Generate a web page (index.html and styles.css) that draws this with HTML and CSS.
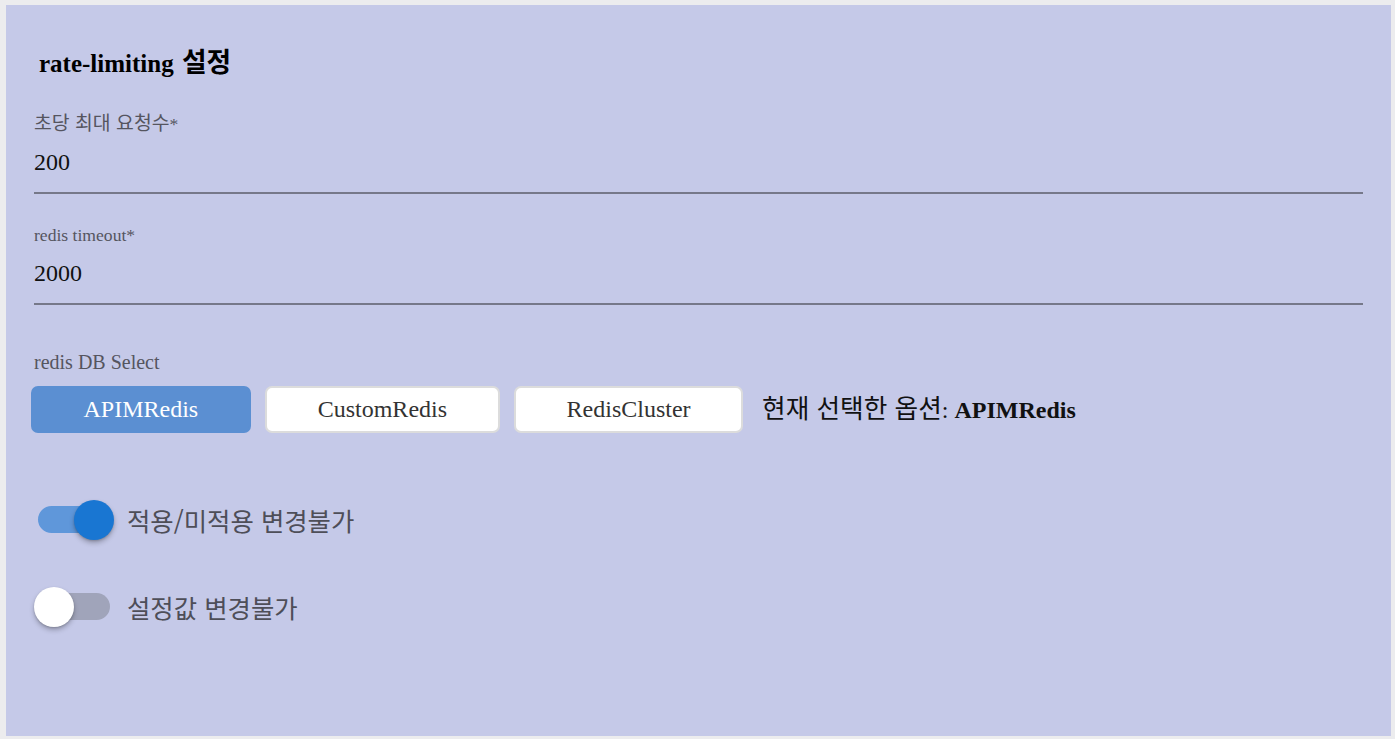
FILE: index.html
```html
<!DOCTYPE html>
<html lang="ko">
<head>
<meta charset="utf-8">
<title>rate-limiting 설정</title>
<link rel="stylesheet" href="styles.css">
</head>
<body>
<div class="panel">
  <h2 class="title">rate-limiting <span class="ko ko-title">설정</span></h2>

  <div class="field field-first">
    <div class="field-label"><span class="ko">초당 최대 요청수</span>*</div>
    <div class="field-value">200</div>
  </div>

  <div class="field">
    <div class="field-label">redis timeout*</div>
    <div class="field-value">2000</div>
  </div>

  <div class="select-label">redis DB Select</div>
  <div class="select-row">
    <button class="opt opt-active">APIMRedis</button>
    <button class="opt">CustomRedis</button>
    <button class="opt">RedisCluster</button>
    <span class="current"><span class="ko ko-current">현재 선택한 옵션</span>: <b>APIMRedis</b></span>
  </div>

  <div class="switch-row switch-row-first">
    <span class="switch switch-on"><span class="track"></span><span class="knob"></span></span>
    <span class="switch-label">적용/미적용 변경불가</span>
  </div>
  <div class="switch-row">
    <span class="switch"><span class="track"></span><span class="knob"></span></span>
    <span class="switch-label">설정값 변경불가</span>
  </div>
</div>
</body>
</html>
```

FILE: styles.css
```css
html, body {
  margin: 0;
}
body {
  background: #ececee;
  padding: 5px 4px 3px 6px;
  font-family: "Liberation Serif", "Noto Sans CJK KR", serif;
}
.panel {
  background: #c5c9e8;
  height: 731px;
  box-sizing: border-box;
  padding: 44px 28px 0 28px;
}
.ko {
  font-family: "Noto Sans CJK KR", sans-serif;
  font-size: 1.1em;
  line-height: 0;
}
.ko-title {
  font-size: 1.07em;
  margin-left: 2px;
}
.ko-current {
  font-size: 1.07em;
}
.title {
  margin: 0;
  padding-left: 5px;
  font-size: 25px;
  line-height: 30px;
  font-weight: bold;
  color: #000;
}
.field {
  margin-top: 30px;
  border-bottom: 2px solid #767889;
  padding-bottom: 15px;
}
.field-first {
  margin-top: 34px;
}
.field-label {
  font-size: 17.6px;
  line-height: 22px;
  color: #55555f;
}
.field-value {
  margin-top: 12px;
  font-size: 24px;
  line-height: 30px;
  color: #111;
}
.select-label {
  margin-top: 45px;
  font-size: 20px;
  line-height: 24px;
  color: #55555f;
}
.select-row {
  margin-top: 12px;
  display: flex;
  align-items: center;
  gap: 14.5px;
  margin-left: -3px;
}
.opt {
  height: 47px;
  box-sizing: border-box;
  padding: 0 50.5px;
  border: 2px solid #dcdcdc;
  border-radius: 7px;
  background: #fff;
  font-family: "Liberation Serif", "Noto Sans CJK KR", serif;
  font-size: 24px;
  line-height: 43px;
  color: #333;
}
.opt-active {
  background: #5b8fd2;
  border-color: #5b8fd2;
  color: #fff;
}
.current {
  margin-left: 4.5px;
  font-size: 24px;
  line-height: 30px;
  color: #111;
}
.switch-row {
  display: flex;
  align-items: center;
  margin-top: 47px;
}
.switch-row-first {
  margin-top: 67px;
}
.switch {
  position: relative;
  width: 80px;
  height: 40px;
  flex: none;
}
.track {
  display: block;
  margin: 6px 4px 0 4px;
  height: 27px;
  border-radius: 14px;
  background: #a0a4ba;
}
.knob {
  position: absolute;
  top: 0;
  left: 0;
  width: 40px;
  height: 40px;
  border-radius: 50%;
  background: #fff;
  box-shadow: 0 3px 5px rgba(0, 0, 0, 0.25), 0 1px 2px rgba(0, 0, 0, 0.15);
}
.switch-on .track {
  background: #5f97da;
}
.switch-on .knob {
  left: 40px;
  background: #1976d2;
}
.switch-label {
  margin-left: 13px;
  font-family: "Noto Sans CJK KR", sans-serif;
  font-size: 25.4px;
  line-height: 30px;
  color: #4e4e58;
}
```
